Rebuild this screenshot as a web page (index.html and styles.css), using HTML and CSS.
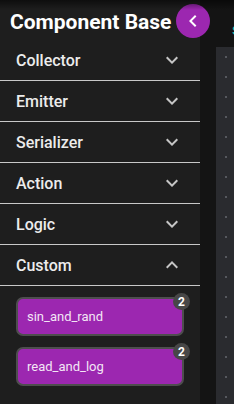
FILE: index.html
```html
<!DOCTYPE html>
<html lang="en">
<head>
<meta charset="utf-8">
<title>Component Base</title>
<link rel="stylesheet" href="styles.css">
</head>
<body>
<div class="app">
  <aside class="sidebar">
    <div class="title">Component Base</div>
    <div class="section"><span>Collector</span><svg class="chev" viewBox="0 0 24 24"><path d="M16.59 8.59L12 13.17 7.41 8.59 6 10l6 6 6-6z"/></svg></div>
    <div class="section"><span>Emitter</span><svg class="chev" viewBox="0 0 24 24"><path d="M16.59 8.59L12 13.17 7.41 8.59 6 10l6 6 6-6z"/></svg></div>
    <div class="section"><span>Serializer</span><svg class="chev" viewBox="0 0 24 24"><path d="M16.59 8.59L12 13.17 7.41 8.59 6 10l6 6 6-6z"/></svg></div>
    <div class="section"><span>Action</span><svg class="chev" viewBox="0 0 24 24"><path d="M16.59 8.59L12 13.17 7.41 8.59 6 10l6 6 6-6z"/></svg></div>
    <div class="section"><span>Logic</span><svg class="chev" viewBox="0 0 24 24"><path d="M16.59 8.59L12 13.17 7.41 8.59 6 10l6 6 6-6z"/></svg></div>
    <div class="section"><span>Custom</span><svg class="chev" viewBox="0 0 24 24"><path d="M12 8l-6 6 1.41 1.41L12 10.83l4.59 4.58L18 14z"/></svg></div>
    <div class="items">
      <div class="card"><span>sin_and_rand</span><span class="badge">2</span></div>
      <div class="card"><span>read_and_log</span><span class="badge">2</span></div>
    </div>
  </aside>
  <main class="workspace">
    <div class="ws-header"><span class="ws-title">s</span></div>
    <div class="canvas"></div>
  </main>
  <button class="collapse" aria-label="Collapse"><svg viewBox="0 0 24 24"><path d="M15.41 7.41L14 6l-6 6 6 6 1.41-1.41L10.83 12z"/></svg></button>
  <div class="top-shadow"></div>
</div>
</body>
</html>
```
FILE: styles.css
```css
html, body {
  margin: 0;
  padding: 0;
  height: 100%;
  overflow: hidden;
}
body {
  background: #141414;
  font-family: Roboto, "Liberation Sans", sans-serif;
}
.app {
  position: relative;
  display: flex;
  height: 404px;
}
.sidebar {
  width: 200px;
  flex: none;
  background: #1e1e1e;
  display: flex;
  flex-direction: column;
}
.title {
  height: 40px;
  display: flex;
  align-items: center;
  padding-left: 10px;
  padding-top: 4px;
  box-sizing: border-box;
  color: #fff;
  font-weight: 700;
  font-size: 21px;
  white-space: nowrap;
}
.section {
  height: 41px;
  box-sizing: border-box;
  border-bottom: 1px solid #c8c8c8;
  display: flex;
  align-items: center;
  justify-content: space-between;
  padding: 0 16px;
  color: #ececec;
  font-size: 16px;
  font-weight: 500;
}
.chev {
  width: 24px;
  height: 24px;
  fill: #c6c6c6;
}
.items {
  display: flex;
  flex-direction: column;
  gap: 11px;
  padding: 11px 16px 0;
}
.card {
  position: relative;
  height: 39px;
  box-sizing: border-box;
  border: 2px solid #4e4e4e;
  border-radius: 7px;
  background: #9c27b0;
  display: flex;
  align-items: center;
  padding-left: 9px;
  color: #f3e6f5;
  font-size: 13px;
}
.badge {
  position: absolute;
  top: -6px;
  right: -8px;
  width: 17px;
  height: 17px;
  border-radius: 50%;
  background: #474747;
  color: #fff;
  font-size: 12px;
  font-weight: 700;
  display: flex;
  align-items: center;
  justify-content: center;
}
.workspace {
  flex: 1;
  display: flex;
  flex-direction: column;
  padding-left: 16px;
  overflow: hidden;
}
.ws-header {
  height: 47px;
  flex: none;
  display: flex;
  align-items: center;
  padding-left: 16px;
  box-sizing: border-box;
  padding-top: 11px;
}
.ws-title {
  color: #17b8a6;
  font-size: 16px;
  font-weight: 500;
}
.canvas {
  flex: 1;
  background-color: #2a2b2f;
  background-image: radial-gradient(circle, #56585e 1px, transparent 1.4px);
  background-size: 20px 20px;
  background-position: 0 0;
}
.collapse {
  position: absolute;
  left: 176px;
  top: 4px;
  width: 34px;
  height: 34px;
  border-radius: 50%;
  border: none;
  padding: 0;
  background: #9c27b0;
  display: flex;
  align-items: center;
  justify-content: center;
}
.collapse svg {
  width: 24px;
  height: 24px;
  fill: #fff;
}
.top-shadow {
  position: absolute;
  left: 0;
  top: 0;
  right: 0;
  height: 10px;
  background: linear-gradient(rgba(0,0,0,0.55), rgba(0,0,0,0));
  pointer-events: none;
}
```
